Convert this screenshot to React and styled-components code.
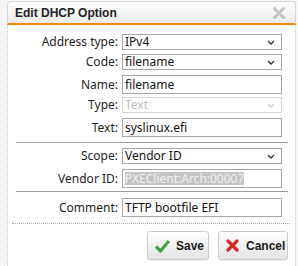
import React from 'react';
import styled, { createGlobalStyle } from 'styled-components';

const GlobalStyle = createGlobalStyle`
  html, body {
    margin: 0;
    padding: 0;
    background: #f6f6f6;
    overflow: hidden;
  }
`;

const Dialog = styled.div`
  margin: 1px 0 0 7px;
  width: 289px;
  font-family: 'Noto Sans', 'Liberation Sans', sans-serif;
  font-size: 12px;
  color: #1e1e1e;
`;

const TitleBar = styled.div`
  box-sizing: border-box;
  height: 24px;
  display: flex;
  align-items: center;
  justify-content: space-between;
  padding: 0 10px 0 7px;
  border: 1px solid #d8d8d8;
  border-bottom: 2px solid #f0860a;
  border-radius: 4px 4px 0 0;
  background: linear-gradient(#ffffff, #ebebeb);
`;

const Title = styled.span`
  font-family: 'Liberation Sans', Arial, sans-serif;
  font-weight: bold;
  font-size: 12px;
  color: #222;
`;

const Body = styled.div`
  background: #fff;
  border-left: 1px dotted #c6c6c6;
  border-right: 1px dotted #c6c6c6;
  padding: 7px 7px 10px 8px;
`;

const Section = styled.div`
  display: grid;
  grid-template-columns: 102px 160px;
  column-gap: 4px;
  align-items: center;
`;

const Label = styled.div`
  text-align: right;
  padding: ${(p) => (p.$tall ? '3px 0 1px' : '2px 0')};
  line-height: 16px;
  white-space: nowrap;
`;

const Cell = styled.div`
  padding: ${(p) => (p.$tall ? '3px 0 1px' : '2px 0')};
`;

const SelectBox = styled.div`
  box-sizing: border-box;
  height: 16px;
  display: flex;
  align-items: center;
  justify-content: space-between;
  padding: 0 6px 0 2px;
  border: 1px solid ${(p) => (p.$disabled ? '#d4d4d4' : '#a6a6a6')};
  color: ${(p) => (p.$disabled ? '#bdbdbd' : '#111')};
  background: #fff;
  line-height: 14px;
`;

const TextBox = styled.div`
  box-sizing: border-box;
  height: 19px;
  display: flex;
  align-items: center;
  padding: 0 2px;
  border: 1px solid #a6a6a6;
  color: #111;
  background: #fff;
  white-space: nowrap;
`;

const Selected = styled.span`
  background: #c4c4c4;
  color: #f2f2f2;
  line-height: 12px;
  padding-top: 1px;
`;

const Rule = styled.div`
  height: 1px;
  background: #9c9c9c;
  margin: ${(p) => p.$margin};
`;

const Footer = styled.div`
  display: flex;
  justify-content: flex-end;
  gap: 9px;
  margin: 5px -2px 0 -4px;
  padding: 7px 2px 0 0;
  border-top: 1px dotted #adadad;
`;

const Button = styled.button`
  box-sizing: border-box;
  width: ${(p) => p.$width}px;
  height: 29px;
  display: flex;
  align-items: center;
  gap: ${(p) => p.$gap}px;
  padding: 0 0 0 7px;
  border: 1px solid #cbcbcb;
  border-radius: 3px;
  background: linear-gradient(#ffffff, #e4e4e4);
  font-family: 'Liberation Sans', Arial, sans-serif;
  font-weight: bold;
  font-size: 12px;
  color: #1a1a1a;
  white-space: nowrap;
  box-shadow: 0 1px 1px rgba(0, 0, 0, 0.06);
`;

const Chevron = ({ light }) => (
  <svg width="8" height="5" viewBox="0 0 8 5">
    <path d="M1 1 L4 4 L7 1" fill="none" stroke={light ? '#cfcfcf' : '#333'} strokeWidth="1.4" />
  </svg>
);

const CloseIcon = () => (
  <svg width="12" height="12" viewBox="0 0 12 12">
    <path d="M1.5 1.5 L10.5 10.5 M10.5 1.5 L1.5 10.5" stroke="#c2c2c2" strokeWidth="3" strokeLinecap="round" />
  </svg>
);

const CheckIcon = () => (
  <svg width="15" height="14" viewBox="0 0 15 14">
    <path d="M1 7.5 L5.5 12 L14 2" fill="none" stroke="#43a047" strokeWidth="3.2" strokeLinejoin="round" />
  </svg>
);

const CrossIcon = () => (
  <svg width="13" height="13" viewBox="0 0 13 13">
    <path d="M2 2 L11 11 M11 2 L2 11" stroke="#d42a1e" strokeWidth="3.2" strokeLinecap="round" />
  </svg>
);

const SelectRow = ({ label, value, disabled }) => (
  <>
    <Label>{label}</Label>
    <Cell>
      <SelectBox $disabled={disabled}>
        <span>{value}</span>
        <Chevron light={disabled} />
      </SelectBox>
    </Cell>
  </>
);

const TextRow = ({ label, children }) => (
  <>
    <Label $tall>{label}</Label>
    <Cell $tall>
      <TextBox>{children}</TextBox>
    </Cell>
  </>
);

export default function App() {
  return (
    <>
      <GlobalStyle />
      <Dialog>
        <TitleBar>
          <Title>Edit DHCP Option</Title>
          <CloseIcon />
        </TitleBar>
        <Body>
          <Section>
            <SelectRow label="Address type:" value="IPv4" />
            <SelectRow label="Code:" value="filename" />
            <TextRow label="Name:">filename</TextRow>
            <SelectRow label="Type:" value="Text" disabled />
            <TextRow label="Text:">syslinux.efi</TextRow>
          </Section>
          <Rule $margin="4px 0 3px" />
          <Section>
            <SelectRow label="Scope:" value="Vendor ID" />
            <TextRow label="Vendor ID:">
              <Selected>PXEClient:Arch:00007</Selected>
            </TextRow>
          </Section>
          <Rule $margin="2px 0 3px" />
          <Section>
            <TextRow label="Comment:">TFTP bootfile EFI</TextRow>
          </Section>
          <Footer>
            <Button $width={62} $gap={6}>
              <CheckIcon />
              Save
            </Button>
            <Button $width={70} $gap={7}>
              <CrossIcon />
              Cancel
            </Button>
          </Footer>
        </Body>
      </Dialog>
    </>
  );
}
